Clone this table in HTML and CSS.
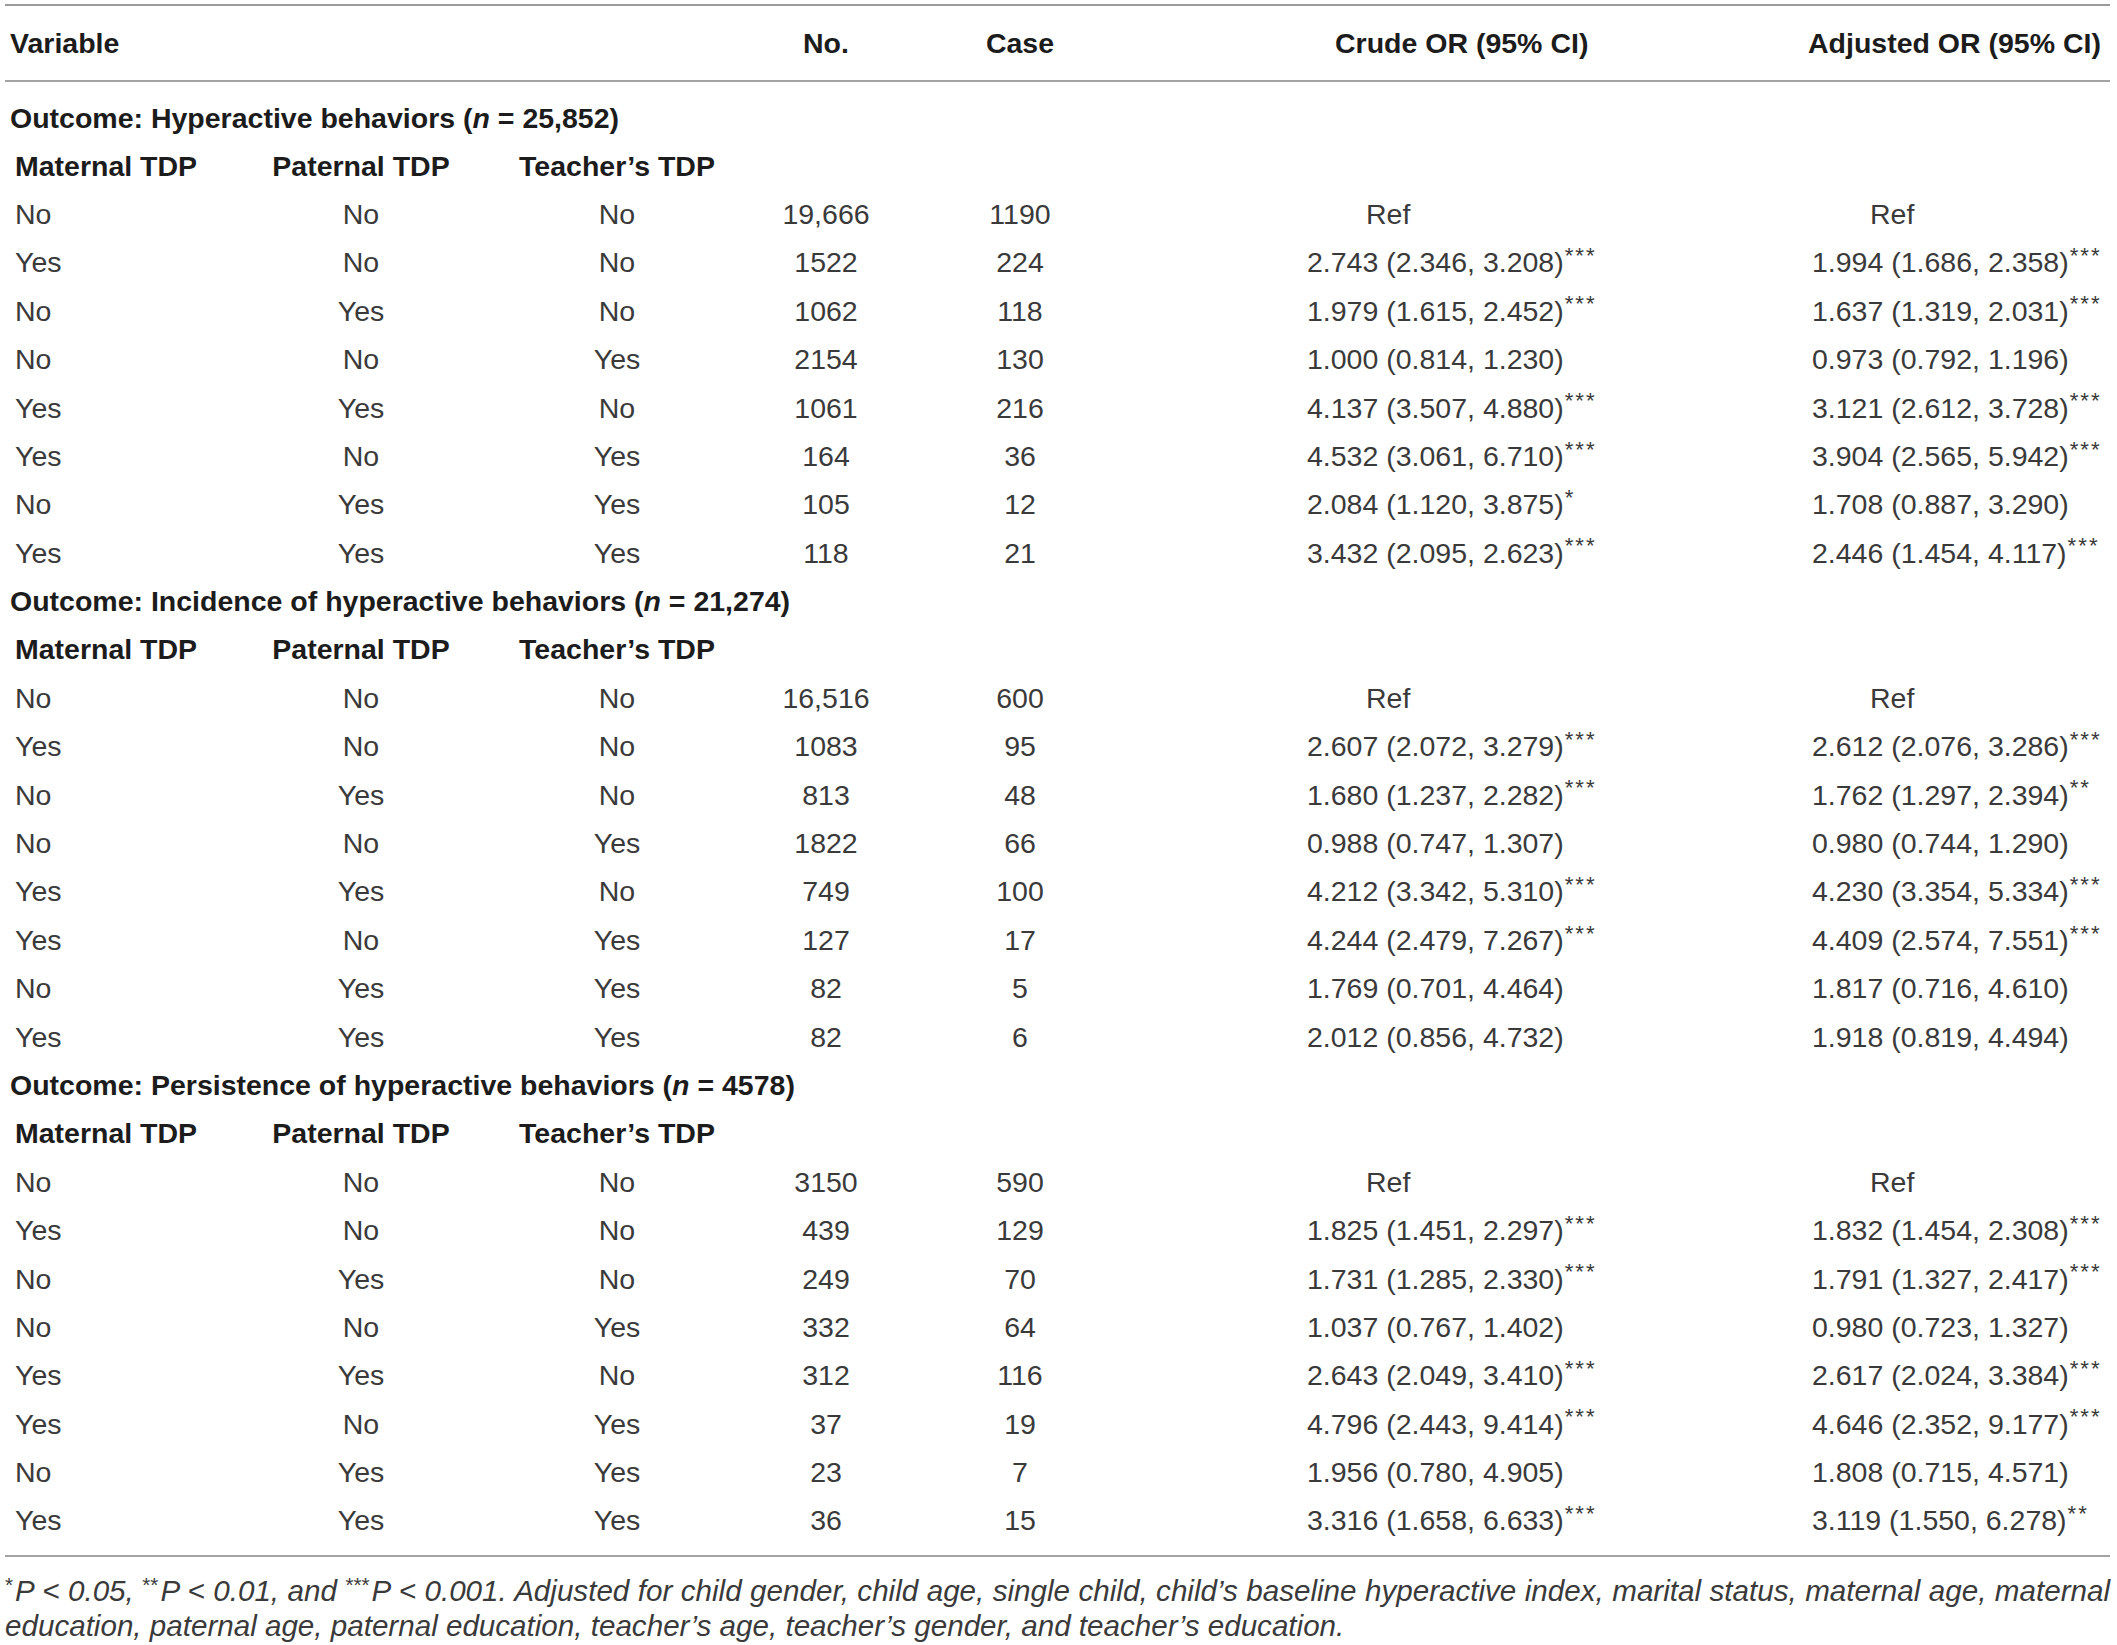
FILE: index.html
```html
<!DOCTYPE html>
<html lang="en">
<head>
<meta charset="utf-8">
<title>Table</title>
<link rel="stylesheet" href="styles.css">
</head>
<body>
<div class="wrap">
<table class="tbl">
  <colgroup>
    <col class="c1"><col class="c2"><col class="c3"><col class="c4"><col class="c5"><col class="c6"><col class="c7">
  </colgroup>
  <thead>
    <tr>
      <th colspan="3" class="h-var">Variable</th>
      <th class="ctr">No.</th>
      <th class="ctr">Case</th>
      <th class="h-crude">Crude OR (95% CI)</th>
      <th class="h-adj">Adjusted OR (95% CI)</th>
    </tr>
  </thead>
  <tbody>
    <tr class="outcome first"><td colspan="7">Outcome: Hyperactive behaviors (<i>n</i> = 25,852)</td></tr>
    <tr class="sub"><td class="l">Maternal TDP</td><td class="ctr">Paternal TDP</td><td class="ctr">Teacher’s TDP</td><td></td><td></td><td></td><td></td></tr>
    <tr><td class="l">No</td><td class="ctr">No</td><td class="ctr">No</td><td class="ctr">19,666</td><td class="ctr">1190</td><td class="cr ref">Ref</td><td class="ad ref">Ref</td></tr>
    <tr><td class="l">Yes</td><td class="ctr">No</td><td class="ctr">No</td><td class="ctr">1522</td><td class="ctr">224</td><td class="cr">2.743 (2.346, 3.208)<sup>***</sup></td><td class="ad">1.994 (1.686, 2.358)<sup>***</sup></td></tr>
    <tr><td class="l">No</td><td class="ctr">Yes</td><td class="ctr">No</td><td class="ctr">1062</td><td class="ctr">118</td><td class="cr">1.979 (1.615, 2.452)<sup>***</sup></td><td class="ad">1.637 (1.319, 2.031)<sup>***</sup></td></tr>
    <tr><td class="l">No</td><td class="ctr">No</td><td class="ctr">Yes</td><td class="ctr">2154</td><td class="ctr">130</td><td class="cr">1.000 (0.814, 1.230)</td><td class="ad">0.973 (0.792, 1.196)</td></tr>
    <tr><td class="l">Yes</td><td class="ctr">Yes</td><td class="ctr">No</td><td class="ctr">1061</td><td class="ctr">216</td><td class="cr">4.137 (3.507, 4.880)<sup>***</sup></td><td class="ad">3.121 (2.612, 3.728)<sup>***</sup></td></tr>
    <tr><td class="l">Yes</td><td class="ctr">No</td><td class="ctr">Yes</td><td class="ctr">164</td><td class="ctr">36</td><td class="cr">4.532 (3.061, 6.710)<sup>***</sup></td><td class="ad">3.904 (2.565, 5.942)<sup>***</sup></td></tr>
    <tr><td class="l">No</td><td class="ctr">Yes</td><td class="ctr">Yes</td><td class="ctr">105</td><td class="ctr">12</td><td class="cr">2.084 (1.120, 3.875)<sup>*</sup></td><td class="ad">1.708 (0.887, 3.290)</td></tr>
    <tr><td class="l">Yes</td><td class="ctr">Yes</td><td class="ctr">Yes</td><td class="ctr">118</td><td class="ctr">21</td><td class="cr">3.432 (2.095, 2.623)<sup>***</sup></td><td class="ad">2.446 (1.454, 4.117)<sup>***</sup></td></tr>

    <tr class="outcome"><td colspan="7">Outcome: Incidence of hyperactive behaviors (<i>n</i> = 21,274)</td></tr>
    <tr class="sub"><td class="l">Maternal TDP</td><td class="ctr">Paternal TDP</td><td class="ctr">Teacher’s TDP</td><td></td><td></td><td></td><td></td></tr>
    <tr><td class="l">No</td><td class="ctr">No</td><td class="ctr">No</td><td class="ctr">16,516</td><td class="ctr">600</td><td class="cr ref">Ref</td><td class="ad ref">Ref</td></tr>
    <tr><td class="l">Yes</td><td class="ctr">No</td><td class="ctr">No</td><td class="ctr">1083</td><td class="ctr">95</td><td class="cr">2.607 (2.072, 3.279)<sup>***</sup></td><td class="ad">2.612 (2.076, 3.286)<sup>***</sup></td></tr>
    <tr><td class="l">No</td><td class="ctr">Yes</td><td class="ctr">No</td><td class="ctr">813</td><td class="ctr">48</td><td class="cr">1.680 (1.237, 2.282)<sup>***</sup></td><td class="ad">1.762 (1.297, 2.394)<sup>**</sup></td></tr>
    <tr><td class="l">No</td><td class="ctr">No</td><td class="ctr">Yes</td><td class="ctr">1822</td><td class="ctr">66</td><td class="cr">0.988 (0.747, 1.307)</td><td class="ad">0.980 (0.744, 1.290)</td></tr>
    <tr><td class="l">Yes</td><td class="ctr">Yes</td><td class="ctr">No</td><td class="ctr">749</td><td class="ctr">100</td><td class="cr">4.212 (3.342, 5.310)<sup>***</sup></td><td class="ad">4.230 (3.354, 5.334)<sup>***</sup></td></tr>
    <tr><td class="l">Yes</td><td class="ctr">No</td><td class="ctr">Yes</td><td class="ctr">127</td><td class="ctr">17</td><td class="cr">4.244 (2.479, 7.267)<sup>***</sup></td><td class="ad">4.409 (2.574, 7.551)<sup>***</sup></td></tr>
    <tr><td class="l">No</td><td class="ctr">Yes</td><td class="ctr">Yes</td><td class="ctr">82</td><td class="ctr">5</td><td class="cr">1.769 (0.701, 4.464)</td><td class="ad">1.817 (0.716, 4.610)</td></tr>
    <tr><td class="l">Yes</td><td class="ctr">Yes</td><td class="ctr">Yes</td><td class="ctr">82</td><td class="ctr">6</td><td class="cr">2.012 (0.856, 4.732)</td><td class="ad">1.918 (0.819, 4.494)</td></tr>

    <tr class="outcome"><td colspan="7">Outcome: Persistence of hyperactive behaviors (<i>n</i> = 4578)</td></tr>
    <tr class="sub"><td class="l">Maternal TDP</td><td class="ctr">Paternal TDP</td><td class="ctr">Teacher’s TDP</td><td></td><td></td><td></td><td></td></tr>
    <tr><td class="l">No</td><td class="ctr">No</td><td class="ctr">No</td><td class="ctr">3150</td><td class="ctr">590</td><td class="cr ref">Ref</td><td class="ad ref">Ref</td></tr>
    <tr><td class="l">Yes</td><td class="ctr">No</td><td class="ctr">No</td><td class="ctr">439</td><td class="ctr">129</td><td class="cr">1.825 (1.451, 2.297)<sup>***</sup></td><td class="ad">1.832 (1.454, 2.308)<sup>***</sup></td></tr>
    <tr><td class="l">No</td><td class="ctr">Yes</td><td class="ctr">No</td><td class="ctr">249</td><td class="ctr">70</td><td class="cr">1.731 (1.285, 2.330)<sup>***</sup></td><td class="ad">1.791 (1.327, 2.417)<sup>***</sup></td></tr>
    <tr><td class="l">No</td><td class="ctr">No</td><td class="ctr">Yes</td><td class="ctr">332</td><td class="ctr">64</td><td class="cr">1.037 (0.767, 1.402)</td><td class="ad">0.980 (0.723, 1.327)</td></tr>
    <tr><td class="l">Yes</td><td class="ctr">Yes</td><td class="ctr">No</td><td class="ctr">312</td><td class="ctr">116</td><td class="cr">2.643 (2.049, 3.410)<sup>***</sup></td><td class="ad">2.617 (2.024, 3.384)<sup>***</sup></td></tr>
    <tr><td class="l">Yes</td><td class="ctr">No</td><td class="ctr">Yes</td><td class="ctr">37</td><td class="ctr">19</td><td class="cr">4.796 (2.443, 9.414)<sup>***</sup></td><td class="ad">4.646 (2.352, 9.177)<sup>***</sup></td></tr>
    <tr><td class="l">No</td><td class="ctr">Yes</td><td class="ctr">Yes</td><td class="ctr">23</td><td class="ctr">7</td><td class="cr">1.956 (0.780, 4.905)</td><td class="ad">1.808 (0.715, 4.571)</td></tr>
    <tr class="last"><td class="l">Yes</td><td class="ctr">Yes</td><td class="ctr">Yes</td><td class="ctr">36</td><td class="ctr">15</td><td class="cr">3.316 (1.658, 6.633)<sup>***</sup></td><td class="ad">3.119 (1.550, 6.278)<sup>**</sup></td></tr>
  </tbody>
</table>
<p class="note"><sup class="ns">*</sup>P &lt; 0.05, <sup class="ns">**</sup>P &lt; 0.01, and <sup class="ns">***</sup>P &lt; 0.001. Adjusted for child gender, child age, single child, child’s baseline hyperactive index, marital status, maternal age, maternal education, paternal age, paternal education, teacher’s age, teacher’s gender, and teacher’s education.</p>
</div>
</body>
</html>
```

FILE: styles.css
```css
html, body {
  margin: 0;
  padding: 0;
  background: #ffffff;
}

body {
  font-family: "Liberation Sans", Arial, sans-serif;
  color: #3a3a3a;
}

.wrap {
  width: 2105px;
  margin-left: 5px;
  padding-top: 4px;
}

.tbl {
  width: 2105px;
  table-layout: fixed;
  border-collapse: collapse;
  font-size: 28.5px;
}

.c1 { width: 255px; }
.c2 { width: 202px; }
.c3 { width: 310px; }
.c4 { width: 108px; }
.c5 { width: 280px; }
.c6 { width: 540px; }
.c7 { width: 410px; }

.tbl th,
.tbl td {
  padding: 0;
  white-space: nowrap;
  vertical-align: middle;
  box-sizing: border-box;
}

.tbl thead tr {
  border-top: 2px solid #9a9a9a;
  border-bottom: 2px solid #a3a3a3;
}

.tbl th {
  height: 76px;
  font-weight: bold;
  color: #1c1c1c;
  text-align: left;
}

.tbl td {
  height: 48.4px;
  line-height: 32px;
  color: #3a3a3a;
}

.ctr { text-align: center !important; }

.h-var { padding-left: 5px !important; }
.h-crude { padding-left: 175px !important; }
.h-adj { padding-left: 108px !important; }

.l { padding-left: 10px !important; }

.cr { padding-left: 147px !important; }
.ad { padding-left: 112px !important; }
.cr.ref { padding-left: 206px !important; }
.ad.ref { padding-left: 170px !important; }

.outcome td {
  font-weight: bold;
  color: #1c1c1c;
  padding-left: 5px;
}

.tbl .outcome.first td {
  height: 60.4px;
  padding-top: 12px;
}

.sub td {
  font-weight: bold;
  color: #1c1c1c;
}

.tbl .last td {
  height: 59.4px;
  padding-bottom: 11px;
  border-bottom: 2px solid #a3a3a3;
}

sup {
  font-size: 0.78em;
  line-height: 0;
  vertical-align: 0.42em;
  letter-spacing: 2px;
  margin-left: 1px;
}

.note {
  margin: 16px 0 0 0;
  font-size: 29.6px;
  line-height: 35px;
  font-style: italic;
  color: #3a3a3a;
  text-align: justify;
}

.note .ns {
  font-style: normal;
  font-size: 0.7em;
  letter-spacing: 0;
  margin-left: 0;
  margin-right: 2px;
}
```
